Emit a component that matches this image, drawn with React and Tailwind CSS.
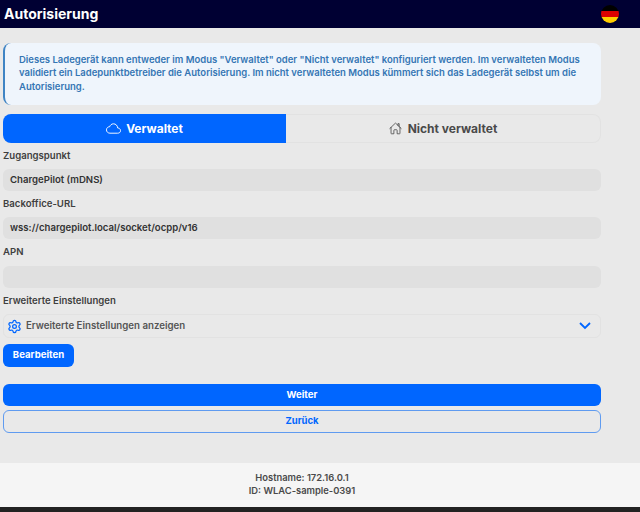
import { IoCloudOutline, IoHomeOutline } from 'react-icons/io5'
import { Settings } from 'lucide-react'

const FIELDS = [
  { label: 'Zugangspunkt', value: 'ChargePilot (mDNS)', gap: 'mt-[5px] pt-[2px]' },
  { label: 'Backoffice-URL', value: 'wss://chargepilot.local/socket/ocpp/v16', gap: 'mt-[5px] pt-[2px]' },
  { label: 'APN', value: '', gap: 'mt-[6px] pt-[1px]' },
]

function Flag() {
  return (
    <div className="flex h-[18px] w-[18px] flex-col overflow-hidden rounded-full">
      <div className="h-[6px] bg-black" />
      <div className="h-[6px] bg-[#dd0000]" />
      <div className="h-[6px] bg-[#ffce00]" />
    </div>
  )
}

export default function App() {
  return (
    <div className="flex h-[512px] w-[640px] flex-col overflow-hidden bg-[#e9e9e9] font-['Inter',sans-serif] text-[#3f3f3f]">
      <header className="flex h-[28px] items-center justify-between bg-[#000033] pl-[4px] pr-[21px]">
        <h1 className="pb-[2px] text-[14px] font-bold text-white">Autorisierung</h1>
        <Flag />
      </header>

      <main className="flex flex-1 flex-col pl-[3px] pr-[39px] pt-[15px]">
        <div className="h-[62px] rounded-lg border-l-2 border-[#3f84c4] bg-[#eff5fc] pl-[14px] pr-2 pt-[10px] text-[9.5px] font-semibold leading-[13.4px] text-[#3576b4]">
          Dieses Ladegerät kann entweder im Modus "Verwaltet" oder "Nicht verwaltet" konfiguriert werden. Im verwalteten Modus validiert ein Ladepunktbetreiber die Autorisierung. Im nicht verwalteten Modus kümmert sich das Ladegerät selbst um die Autorisierung.
        </div>

        <div className="mt-[9px] flex h-[29px]">
          <button className="flex w-[283px] items-center justify-center gap-[5px] rounded-l-lg bg-[#0066ff] text-[12px] font-bold text-white">
            <IoCloudOutline size={15} />
            Verwaltet
          </button>
          <button className="flex flex-1 items-center justify-center gap-[6px] rounded-r-lg border border-l-0 border-[#e2e2e2] text-[12px] font-bold text-[#4a4a4a]">
            <IoHomeOutline size={13} />
            Nicht verwaltet
          </button>
        </div>

        {FIELDS.map((field) => (
          <div key={field.label}>
            <label className={`${field.gap} block h-[21px] text-[9.6px] font-semibold leading-[12px]`}>{field.label}</label>
            <div className="h-[22px] rounded-md bg-[#e0e0e0] px-[7px] text-[9.6px] font-semibold leading-[22px] text-[#333333]">
              {field.value}
            </div>
          </div>
        ))}

        <label className="mt-[6px] block h-[20px] pt-[1px] text-[9.6px] font-semibold leading-[12px]">Erweiterte Einstellungen</label>
        <div className="flex h-[24px] items-center justify-between rounded-md border border-[#e2e2e2] pl-[3px] pr-[9px]">
          <div className="flex items-center gap-[4px] text-[9.7px] font-semibold text-[#555555]">
            <Settings size={15} strokeWidth={2} className="text-[#0066ff]" />
            Erweiterte Einstellungen anzeigen
          </div>
          <svg width="12" height="8" viewBox="0 0 12 8" fill="none" stroke="#0066ff" strokeWidth="1.8">
            <polyline points="1,1 6,6 11,1" />
          </svg>
        </div>

        <button className="mt-[6px] h-[23px] w-[71px] rounded-md bg-[#0066ff] text-[9.6px] font-bold text-white">
          Bearbeiten
        </button>

        <button className="mt-[17px] h-[22px] rounded-md bg-[#0066ff] text-[9.6px] font-bold text-white">
          Weiter
        </button>
        <button className="mt-[4px] h-[23px] rounded-md border border-[#5f9bf0] text-[9.5px] font-bold text-[#0066ff]">
          Zurück
        </button>
      </main>

      <footer className="h-[44px] bg-[#f5f5f5] pr-[36px] pt-[8px] text-center text-[9.4px] font-semibold leading-[13px] text-[#4a4a4a]">
        <div>Hostname: 172.16.0.1</div>
        <div>ID: WLAC-sample-0391</div>
      </footer>
      <div className="h-[5px] bg-[#222222]" />
    </div>
  )
}
